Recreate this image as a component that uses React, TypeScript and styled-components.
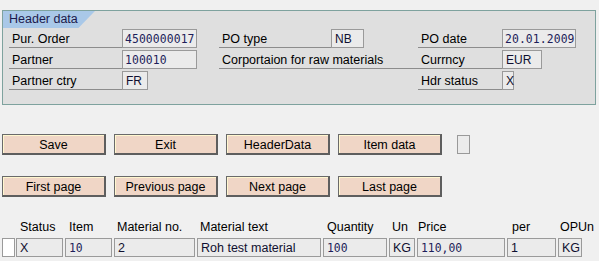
import React from "react";
import styled, { createGlobalStyle } from "styled-components";

const Global = createGlobalStyle`
  html, body { margin: 0; padding: 0; background: #f0f0f0; }
  body { font-family: "Liberation Sans", Arial, sans-serif; font-size: 12px; color: #000; }
`;

const Page = styled.div`
  padding: 10px 0 0 2px;
  width: 599px;
  height: 261px;
  box-sizing: border-box;
`;

const Panel = styled.div`
  width: 594px;
  height: 95px;
  box-sizing: border-box;
  border: 1px solid #7ea29e;
  background: #dfdfdf;
  padding: 0;
`;

const Tab = styled.div`
  width: 92px;
  height: 17px;
  background: #a9c8e8;
  clip-path: polygon(0 0, 100% 0, 82% 100%, 0 100%);
  color: #1c1a4c;
  font-size: 12.5px;
  line-height: 17px;
  padding-left: 6px;
  box-sizing: border-box;
`;

const Rows = styled.div`
  display: flex;
  flex-direction: column;
  gap: 2px;
  padding: 1px 0 0 6px;
`;

const Row = styled.div`
  display: flex;
  height: 19px;
`;

const Field = styled.div<{ $w: number }>`
  width: ${(p) => p.$w}px;
  display: flex;
  height: 19px;
`;

const Label = styled.div<{ $w: number }>`
  width: ${(p) => p.$w}px;
  height: 19px;
  box-sizing: border-box;
  border-bottom: 1px solid #8c8c8c;
  padding: 3px 0 0 3px;
  font-size: 12.5px;
  white-space: nowrap;
`;

const Input = styled.div<{ $w: number; $mono?: boolean }>`
  width: ${(p) => p.$w}px;
  height: 19px;
  box-sizing: border-box;
  border: 1px solid #9a9a9a;
  background: #ebebeb;
  padding: ${(p) => (p.$mono ? "1px 0 0 2px" : "1px 0 0 3px")};
  font-family: ${(p) =>
    p.$mono ? '"DejaVu Sans Mono", monospace' : '"Liberation Sans", Arial, sans-serif'};
  font-size: ${(p) => (p.$mono ? "11.4px" : "12px")};
  letter-spacing: ${(p) => (p.$mono ? "0.1px" : "0")};
  color: ${(p) => (p.$mono ? "#1e1e5a" : "#101030")};
  line-height: 16px;
  white-space: nowrap;
`;

const Buttons = styled.div`
  display: flex;
  flex-direction: column;
  gap: 21px;
  margin-top: 29px;
`;

const ButtonRow = styled.div`
  display: flex;
  align-items: center;
  gap: 8px;
`;

const Btn = styled.div`
  width: 104px;
  height: 21px;
  box-sizing: border-box;
  background: #f0d6c6;
  border-top: 1px solid #6a6a6a;
  border-left: 1px solid #6a6a6a;
  border-right: 2px solid #5e5e5e;
  border-bottom: 2px solid #5e5e5e;
  box-shadow: inset 1px 1px 0 #fff7cf;
  display: flex;
  align-items: center;
  justify-content: center;
  font-size: 12.5px;
  color: #000;
  padding-top: 1px;
`;

const SmallBox = styled.div`
  width: 13px;
  height: 19px;
  box-sizing: border-box;
  border: 1px solid #999;
  background: #ebebeb;
  margin-left: 7px;
`;

const Table = styled.div`
  margin-top: 21px;
  display: flex;
  flex-direction: column;
  gap: 4px;
`;

const cols = "14px 49px 49px 83px 126px 66px 28px 90px 51px 26px";

const HeadRow = styled.div`
  display: grid;
  grid-template-columns: ${cols};
  height: 16px;
  align-items: end;
`;

const Head = styled.div<{ $pl: number }>`
  padding-left: ${(p) => p.$pl}px;
  font-size: 12.5px;
  white-space: nowrap;
  color: #000;
`;

const DataRow = styled.div`
  display: grid;
  grid-template-columns: ${cols};
  height: 19px;
`;

const Cell = styled.div<{ $mono?: boolean; $white?: boolean }>`
  margin-right: ${(p) => (p.$white ? "1px" : "2px")};
  height: 19px;
  box-sizing: border-box;
  border: 1px solid #9a9a9a;
  background: ${(p) => (p.$white ? "#ffffff" : "#ebebeb")};
  padding: ${(p) => (p.$mono ? "1px 0 0 3px" : "1px 0 0 3px")};
  font-family: ${(p) =>
    p.$mono ? '"DejaVu Sans Mono", monospace' : '"Liberation Sans", Arial, sans-serif'};
  font-size: ${(p) => (p.$mono ? "11.4px" : "12.5px")};
  color: ${(p) => (p.$mono ? "#1e1e5a" : "#101030")};
  line-height: 16px;
  white-space: nowrap;
`;

export default function App() {
  return (
    <Page>
      <Global />
      <Panel>
        <Tab>Header data</Tab>
        <Rows>
          <Row>
            <Field $w={210}>
              <Label $w={113}>Pur. Order</Label>
              <Input $w={75} $mono>4500000017</Input>
            </Field>
            <Field $w={199}>
              <Label $w={112}>PO type</Label>
              <Input $w={33}>NB</Input>
            </Field>
            <Field $w={160}>
              <Label $w={84}>PO date</Label>
              <Input $w={74} $mono>20.01.2009</Input>
            </Field>
          </Row>
          <Row>
            <Field $w={210}>
              <Label $w={113}>Partner</Label>
              <Input $w={75} $mono>100010</Input>
            </Field>
            <Field $w={199}>
              <Label $w={199}>Corportaion for raw materials</Label>
            </Field>
            <Field $w={160}>
              <Label $w={84}>Currncy</Label>
              <Input $w={40}>EUR</Input>
            </Field>
          </Row>
          <Row>
            <Field $w={210}>
              <Label $w={113}>Partner ctry</Label>
              <Input $w={26}>FR</Input>
            </Field>
            <Field $w={199} />
            <Field $w={160}>
              <Label $w={84}>Hdr status</Label>
              <Input $w={12}>X</Input>
            </Field>
          </Row>
        </Rows>
      </Panel>

      <Buttons>
        <ButtonRow>
          <Btn>Save</Btn>
          <Btn>Exit</Btn>
          <Btn>HeaderData</Btn>
          <Btn>Item data</Btn>
          <SmallBox />
        </ButtonRow>
        <ButtonRow>
          <Btn>First page</Btn>
          <Btn>Previous page</Btn>
          <Btn>Next page</Btn>
          <Btn>Last page</Btn>
        </ButtonRow>
      </Buttons>

      <Table>
        <HeadRow>
          <Head $pl={0} />
          <Head $pl={4}>Status</Head>
          <Head $pl={4}>Item</Head>
          <Head $pl={3}>Material no.</Head>
          <Head $pl={3}>Material text</Head>
          <Head $pl={4}>Quantity</Head>
          <Head $pl={3}>Un</Head>
          <Head $pl={1}>Price</Head>
          <Head $pl={5}>per</Head>
          <Head $pl={2}>OPUn</Head>
        </HeadRow>
        <DataRow>
          <Cell $white />
          <Cell>X</Cell>
          <Cell $mono>10</Cell>
          <Cell>2</Cell>
          <Cell>Roh test material</Cell>
          <Cell $mono>100</Cell>
          <Cell>KG</Cell>
          <Cell $mono>110,00</Cell>
          <Cell>1</Cell>
          <Cell>KG</Cell>
        </DataRow>
      </Table>
    </Page>
  );
}
